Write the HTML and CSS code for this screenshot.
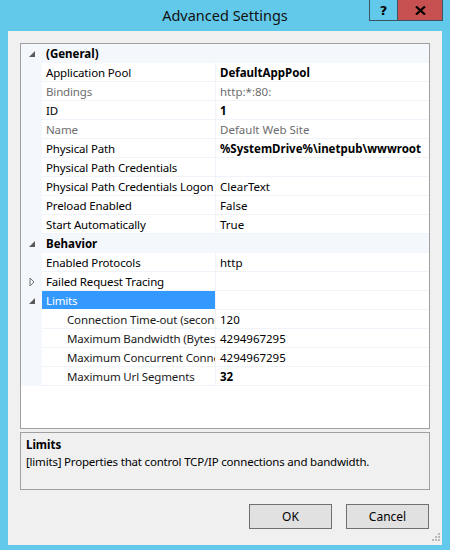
FILE: index.html
```html
<!DOCTYPE html>
<html>
<head>
<meta charset="utf-8">
<link rel="stylesheet" href="styles.css">
</head>
<body>
<div class="window">
  <div class="titlebar">
    <div class="tb-left"></div>
    <div class="title">Advanced Settings</div>
    <div class="tb-right">
      <div class="cap-btn help">?</div>
      <div class="cap-btn close"><svg width="11" height="9" viewBox="0 0 11 9"><path d="M1 0.5 L10 8.5 M10 0.5 L1 8.5" stroke="#000" stroke-width="2.2"/></svg></div>
    </div>
  </div>
  <div class="client">
    <div class="grid">
      <div class="row cat">
        <div class="gut"><svg class="exp" width="8" height="8" viewBox="0 0 8 8"><path d="M7 1 L7 7 L1 7 Z" fill="#5a5a5a"/></svg></div>
        <div class="catname">(General)</div>
      </div>
      <div class="row"><div class="gut"></div><div class="name">Application Pool</div><div class="val b">DefaultAppPool</div></div>
      <div class="row dis"><div class="gut"></div><div class="name">Bindings</div><div class="val">http:*:80:</div></div>
      <div class="row"><div class="gut"></div><div class="name">ID</div><div class="val b">1</div></div>
      <div class="row dis"><div class="gut"></div><div class="name">Name</div><div class="val">Default Web Site</div></div>
      <div class="row"><div class="gut"></div><div class="name">Physical Path</div><div class="val b">%SystemDrive%\inetpub\wwwroot</div></div>
      <div class="row"><div class="gut"></div><div class="name">Physical Path Credentials</div><div class="val"></div></div>
      <div class="row"><div class="gut"></div><div class="name">Physical Path Credentials Logon</div><div class="val">ClearText</div></div>
      <div class="row"><div class="gut"></div><div class="name">Preload Enabled</div><div class="val">False</div></div>
      <div class="row"><div class="gut"></div><div class="name">Start Automatically</div><div class="val">True</div></div>
      <div class="row cat">
        <div class="gut"><svg class="exp" width="8" height="8" viewBox="0 0 8 8"><path d="M7 1 L7 7 L1 7 Z" fill="#5a5a5a"/></svg></div>
        <div class="catname">Behavior</div>
      </div>
      <div class="row"><div class="gut"></div><div class="name">Enabled Protocols</div><div class="val">http</div></div>
      <div class="row"><div class="gut"><svg class="exp" width="8" height="10" viewBox="0 0 8 10"><path d="M2 1 L6 5 L2 9 Z" fill="none" stroke="#707070" stroke-width="1"/></svg></div><div class="name">Failed Request Tracing</div><div class="val"></div></div>
      <div class="row"><div class="gut"><svg class="exp" width="8" height="8" viewBox="0 0 8 8"><path d="M7 1 L7 7 L1 7 Z" fill="#5a5a5a"/></svg></div><div class="name sel">Limits</div><div class="val"></div></div>
      <div class="row"><div class="gut"></div><div class="name sub">Connection Time-out (seconds)</div><div class="val">120</div></div>
      <div class="row"><div class="gut"></div><div class="name sub">Maximum Bandwidth (Bytes/second)</div><div class="val">4294967295</div></div>
      <div class="row"><div class="gut"></div><div class="name sub">Maximum Concurrent Connections</div><div class="val">4294967295</div></div>
      <div class="row"><div class="gut"></div><div class="name sub">Maximum Url Segments</div><div class="val b">32</div></div>
    </div>
    <div class="desc">
      <div class="desc-title">Limits</div>
      <div class="desc-text">[limits] Properties that control TCP/IP connections and bandwidth.</div>
    </div>
    <div class="buttons">
      <div class="btn">OK</div>
      <div class="btn">Cancel</div>
    </div>
    <svg class="grip" width="12" height="12" viewBox="0 0 12 12">
      <g fill="#b8b8b8">
        <rect x="9" y="1" width="2" height="2"/>
        <rect x="6" y="4" width="2" height="2"/><rect x="9" y="4" width="2" height="2"/>
        <rect x="3" y="7" width="2" height="2"/><rect x="6" y="7" width="2" height="2"/><rect x="9" y="7" width="2" height="2"/>
      </g>
    </svg>
  </div>
</div>
</body>
</html>
```
FILE: styles.css
```css
html, body {
  margin: 0;
  padding: 0;
}
body {
  width: 450px;
  height: 550px;
  overflow: hidden;
  font-family: "Noto Sans", "Open Sans", sans-serif;
  font-size: 11.5px;
  color: #000;
}
.window {
  width: 450px;
  height: 550px;
  box-sizing: border-box;
  background: #63c9ea;
  display: flex;
  flex-direction: column;
  padding: 0 8px 5px 8px;
}
.titlebar {
  height: 31px;
  display: grid;
  grid-template-columns: 1fr auto 1fr;
  margin: 0 -8px;
}
.title {
  font-size: 14.5px;
  line-height: 30px;
  color: #111;
}
.tb-right {
  display: flex;
  justify-content: flex-end;
  align-items: flex-start;
  padding-right: 7px;
}
.cap-btn {
  height: 20px;
  border: 1px solid #3b5563;
  border-top: none;
  display: flex;
  align-items: center;
  justify-content: center;
  font-weight: bold;
  font-size: 13px;
  font-family: "DejaVu Sans", sans-serif;
}
.help {
  width: 27px;
  border-right: none;
}
.close {
  width: 44px;
  background: #c75050;
}
.client {
  flex: 1;
  background: #f0f0f0;
  padding: 12px 12px 0 12px;
  display: flex;
  flex-direction: column;
  position: relative;
}
.grid {
  height: 386px;
  box-sizing: border-box;
  border: 1px solid #a0a0a0;
  background: #fff;
  overflow: hidden;
}
.row {
  display: flex;
  height: 19px;
  line-height: 17px;
}
.gut {
  width: 21px;
  flex: none;
  background: #f4f7fc;
  display: flex;
  align-items: center;
  justify-content: center;
}
.name {
  width: 174px;
  flex: none;
  box-sizing: border-box;
  padding: 1px 0 0 4px;
  border-bottom: 1px solid #f0f3f9;
  border-right: 1px solid #f0f3f9;
  white-space: nowrap;
  overflow: hidden;
  letter-spacing: -0.15px;
}
.name.sub {
  padding-left: 25px;
  color: #1a1a1a;
}
.name.sel {
  background: #3399ff;
  color: #fff;
  border-bottom-color: #fff;
}
.val {
  flex: 1;
  padding: 1px 0 0 4px;
  border-bottom: 1px solid #f0f3f9;
  white-space: nowrap;
  overflow: hidden;
}
.val.b {
  font-weight: bold;
}
.dis .name, .dis .val {
  color: #6d6d6d;
}
.row.cat {
  background: #f4f7fc;
}
.catname {
  flex: 1;
  padding: 1px 0 0 4px;
  font-weight: bold;
}
.desc {
  margin-top: 3px;
  height: 58px;
  box-sizing: border-box;
  border: 1px solid #a0a0a0;
  padding: 3px 5px;
  font-size: 11.5px;
  line-height: 17px;
}
.desc-title {
  font-weight: bold;
}
.desc-text {
  letter-spacing: -0.2px;
}
.buttons {
  margin-top: 14px;
  display: flex;
  justify-content: flex-end;
  gap: 14px;
  padding-right: 1px;
}
.btn {
  width: 83px;
  height: 25px;
  box-sizing: border-box;
  border: 1px solid #707070;
  background: #e1e1e1;
  font-size: 12px;
  display: flex;
  align-items: center;
  justify-content: center;
}
.grip {
  position: absolute;
  right: 1px;
  bottom: 1px;
}
```
